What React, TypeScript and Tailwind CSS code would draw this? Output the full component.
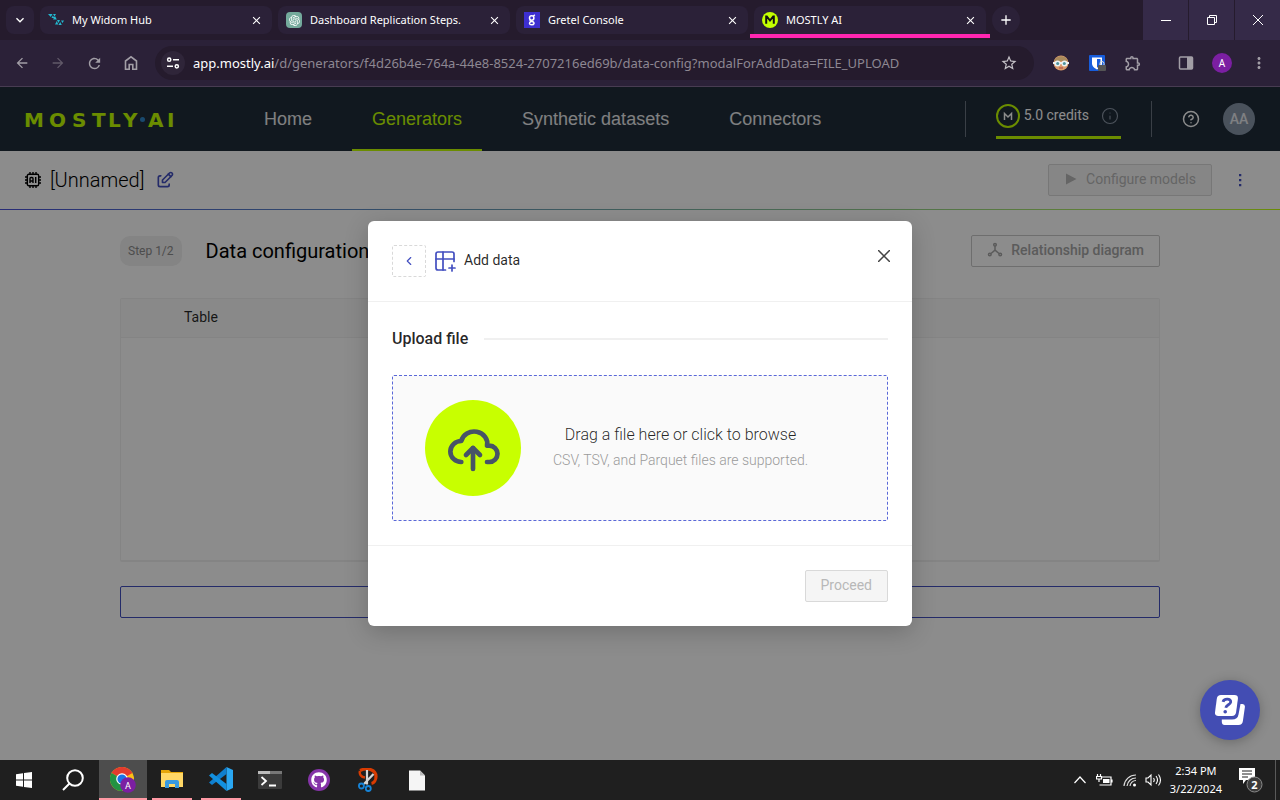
import React from "react";
import { MdArrowBack, MdArrowForward, MdRefresh, MdStarBorder, MdMoreVert, MdAdd, MdClose, MdOutlineExtension, MdKeyboardArrowDown } from "react-icons/md";
import { TbTablePlus, TbCloudUpload, TbEdit } from "react-icons/tb";
import { RiOpenaiFill } from "react-icons/ri";
import { FaGithub } from "react-icons/fa";
import { ChevronLeft, CircleQuestionMark, Info } from "lucide-react";

const chromeFont = "font-['Noto_Sans','Open_Sans',sans-serif]";

function HubIcon() {
  return (
    <svg viewBox="0 0 16 16" className="size-4 shrink-0" fill="#22b8cf">
      <path d="M0 2h4.500L2.800 5zM5 2h3l-1.500 2.500zM3.500 6l1.300-2.500L6.500 6zM7 4l1.800 3.500H5zM9 8h3l-1.500 3zM7 12.500 8.800 9l1.500 3.500zM13 8.500h3L14.500 11zM10.500 13l1.700-3 1.600 3z" />
    </svg>
  );
}
function OpenAiIcon() {
  return (
    <span className="flex size-4 shrink-0 items-center justify-center rounded-sm bg-[#74aa9c] text-white">
      <RiOpenaiFill size={13} />
    </span>
  );
}
function GretelIcon() {
  return (
    <svg viewBox="0 0 16 16" className="size-4 shrink-0">
      <rect width="16" height="16" fill="#3d2fd0" />
      <g fill="none" stroke="#fff" strokeWidth="1.500">
        <circle cx="7.700" cy="6" r="2.200" />
        <path d="M9.300 4.200 10.800 2.800M6.500 8.200c-1 1 .2 1.300 1.500 1.400 1.500.1 2.200.8 2 1.900-.3 1.700-4.300 1.700-4.500 0-.1-.9.700-1.600 1.600-1.800" />
      </g>
    </svg>
  );
}
function MostlyIcon() {
  return (
    <svg viewBox="0 0 16 16" className="size-4 shrink-0">
      <circle cx="8" cy="8" r="8" fill="#c3ff00" />
      <path d="M4.200 11.800V4.500h.6L8 8.500l3.200-4h.6v7.300" fill="none" stroke="#111" strokeWidth="2" />
    </svg>
  );
}

function Tab({ icon, title, active }: { icon: React.ReactNode; title: string; active?: boolean }) {
  return (
    <div className={active ? "relative w-58 min-w-0 shrink rounded-t-lg bg-[#2b2138]" : "relative w-58 min-w-0 shrink rounded-lg bg-[#2b2138]"}>
      <div className="flex h-7 items-center gap-2 pr-2 pl-2">
        {icon}
        <span className="min-w-0 flex-1 truncate text-[11px] leading-4 text-white">{title}</span>
        <button aria-label={"Close " + title} className="flex size-4 items-center justify-center text-white">
          <MdClose size={13} />
        </button>
      </div>
      {active && <div className="absolute top-7 -right-1 -left-1 h-1 bg-[#ff26b0]" />}
    </div>
  );
}

function BrowserChrome() {
  return (
    <div className={chromeFont}>
      <div className="flex h-10 bg-[#251b2d]">
        <div className="flex min-w-0 flex-1 items-start gap-1.5 pt-1.5 pl-1.5">
          <button aria-label="Search tabs" className="flex size-7 shrink-0 items-center justify-center rounded-lg bg-[#2b2138] text-white">
            <MdKeyboardArrowDown size={16} />
          </button>
          <Tab icon={<HubIcon />} title="My Widom Hub" />
          <Tab icon={<OpenAiIcon />} title="Dashboard Replication Steps." />
          <Tab icon={<GretelIcon />} title="Gretel Console" />
          <Tab icon={<MostlyIcon />} title="MOSTLY AI" active />
          <button aria-label="New tab" className="flex size-7 shrink-0 items-center justify-center rounded-full bg-[#2b2138] text-white">
            <MdAdd size={16} />
          </button>
        </div>
        <div className="flex gap-px text-white">
          <button aria-label="Minimize" className="flex w-[45px] items-center justify-center bg-[#352a48]">
            <svg viewBox="0 0 10 10" className="size-2.5" stroke="currentColor"><path d="M0 5.500h10" /></svg>
          </button>
          <button aria-label="Restore" className="flex w-[45px] items-center justify-center bg-[#352a48]">
            <svg viewBox="0 0 10 10" className="size-2.5" fill="none" stroke="currentColor"><path d="M.5 2.500h7v7h-7zM2.500 2.500v-2h7v7h-2" /></svg>
          </button>
          <button aria-label="Close window" className="flex w-[45px] items-center justify-center bg-[#352a48]">
            <svg viewBox="0 0 10 10" className="size-2.5" stroke="currentColor"><path d="M0 0l10 10M10 0L0 10" /></svg>
          </button>
        </div>
      </div>
      <div className="flex h-[47px] items-center border-b border-[#483c52] bg-[#2b2138] pr-3 pl-3.5 text-[#a29ea6]">
        <div className="flex items-center gap-5">
          <button aria-label="Back"><MdArrowBack size={16} /></button>
          <button aria-label="Forward" className="text-[#615968]"><MdArrowForward size={16} /></button>
          <button aria-label="Reload"><MdRefresh size={17} /></button>
          <button aria-label="Home page">
            <svg viewBox="0 0 16 16" className="size-4" fill="none" stroke="currentColor" strokeWidth="1.600"><path d="M2.500 14.200V6L8 1.800 13.500 6v8.200h-3.700V9.500H6.200v4.700z" /></svg>
          </button>
        </div>
        <div className="ml-4 flex h-[34px] min-w-0 flex-1 items-center rounded-full bg-[#251b2d] pr-4 pl-1.5">
          <button aria-label="Site information" className="mr-2 flex size-6 shrink-0 items-center justify-center rounded-full bg-[#2f2539] text-white">
            <svg viewBox="0 0 14 14" className="size-3.5" fill="none" stroke="currentColor" strokeWidth="1.500">
              <circle cx="3.200" cy="3.700" r="1.600" /><path d="M7 3.700h6M1 10.300h6" /><circle cx="10.800" cy="10.300" r="1.600" />
            </svg>
          </button>
          <div className="min-w-0 flex-1 truncate text-[13px] leading-5 text-[#8d8792]">
            <span className="text-white">app.mostly.ai</span>/d/generators/f4d26b4e-764a-44e8-8524-2707216ed69b/data-config?modalForAddData=FILE_UPLOAD
          </div>
          <button aria-label="Bookmark" className="text-[#c4c1c7]"><MdStarBorder size={18} /></button>
        </div>
        <div className="ml-4.5 flex items-center gap-4.5">
          <button aria-label="Goggles extension" className="flex w-4.5 justify-center">
            <svg viewBox="0 0 16 16" className="size-4">
              <circle cx="8" cy="8" r="7.500" fill="#d99a6c" />
              <path d="M1 6a7.500 7.500 0 0 1 14 0z" fill="#a98a5c" />
              <path d="M0 7h16v2H0z" fill="#eee" />
              <circle cx="4.500" cy="8.500" r="3" fill="#e9f2f3" /><circle cx="11.500" cy="8.500" r="3" fill="#e9f2f3" />
              <circle cx="4.700" cy="8.500" r="1.500" fill="#4f929c" /><circle cx="11.300" cy="8.500" r="1.500" fill="#4f929c" />
              <path d="M6 13h4" stroke="#a44" />
            </svg>
          </button>
          <button aria-label="Password manager" className="flex w-4.5 justify-center">
            <svg viewBox="0 0 17 17" className="size-[17px]">
              <rect width="16" height="16" rx="1" fill="#175ddc" />
              <path d="M3 2.500h10v6c0 3-3 5-5 6-2-1-5-3-5-6z" fill="#fff" />
              <path d="M8 4h3.500v4.500C11.500 10.500 9.500 12 8 12.800z" fill="#175ddc" />
              <rect x="9" y="10" width="8" height="6" rx="1" fill="#555" /><path d="M11 10V8.500a2 2 0 0 1 4 0V10" stroke="#ddd" fill="none" />
            </svg>
          </button>
          <button aria-label="Extensions"><MdOutlineExtension size={18} /></button>
          <button aria-label="Side panel" className="ml-4.5">
            <svg viewBox="0 0 16 16" className="size-4"><rect x="1.500" y="2" width="13" height="12" rx="1" fill="none" stroke="currentColor" strokeWidth="1.500" /><path d="M9 2h5v12H9z" fill="currentColor" /></svg>
          </button>
          <button aria-label="Profile" className="flex size-5 items-center justify-center rounded-full bg-[#7b1fa2] text-[10px] leading-4 text-white">A</button>
          <button aria-label="Browser menu"><MdMoreVert size={18} /></button>
        </div>
      </div>
    </div>
  );
}

function MostlyLogo() {
  return (
    <svg viewBox="0 0 152 24" className="h-6 w-[152px] overflow-visible" role="img" aria-label="MOSTLY AI">
      <text x="-1 24 47 67 83 98 123 142" y="20" fill="#c3ff00" fontFamily="DejaVu Sans, sans-serif" fontWeight="700" fontSize="20">MOSTLYAI</text>
      <circle cx="117.500" cy="12.500" r="2.500" fill="#2f86c8" />
    </svg>
  );
}

function AppHeader() {
  const link = "flex items-center border-b-2 border-transparent px-5 pt-0.5";
  return (
    <header className="flex h-16 items-center bg-[#1f2d3a] px-[25px]">
      <MostlyLogo />
      <nav className="ml-[67px] flex gap-5 self-stretch font-['Liberation_Sans',Arial,sans-serif] text-[18px] leading-6 text-white/90">
        <a href="#home" className={link}>Home</a>
        <a href="#generators" className="flex items-center border-b-2 border-[#c3ff00] px-5 pt-0.5 text-[#c3ff00]">Generators</a>
        <a href="#datasets" className={link}>Synthetic datasets</a>
        <a href="#connectors" className={link}>Connectors</a>
      </nav>
      <div className="ml-auto flex items-center">
        <div className="mr-[30px] h-9 w-px bg-[#6b7480]" />
        <div className="mt-1 border-b-3 border-[#c3ff00] pb-2">
          <div className="flex items-center gap-1 pr-0.5">
            <svg viewBox="0 0 24 24" className="size-6" fill="none">
              <circle cx="12" cy="12" r="11" stroke="#c3ff00" strokeWidth="2" />
              <path d="M8.500 16V9.500l3.500 3.500 3.500-3.500V16" stroke="#fff" strokeWidth="1.500" />
            </svg>
            <span className="pb-0.5 text-[14px] leading-5 text-white">5.0 credits</span>
            <Info size={18} strokeWidth={1.5} className="ml-2 text-[#8c97a6]" />
          </div>
        </div>
        <div className="mx-[30px] h-9 w-px bg-[#6b7480]" />
        <button aria-label="Help" className="mr-[23px] text-white"><CircleQuestionMark size={18} strokeWidth={2} /></button>
        <button aria-label="Account" className="flex size-8 items-center justify-center rounded-full bg-[#8795a8] text-[14px] leading-5 font-medium text-white/80">AA</button>
      </div>
    </header>
  );
}

function ChipIcon() {
  return (
    <svg viewBox="0 0 16 16" className="size-4" fill="none" stroke="#000" strokeWidth="1.400">
      <rect x="2.300" y="2.300" width="11.400" height="11.400" rx="1.500" />
      <path d="M5 0v2M8 0v2M11 0v2M5 14v2M8 14v2M11 14v2M0 5h2M0 8h2M0 11h2M14 5h2M14 8h2M14 11h2" />
      <path d="M5 11V6.500q0-1 1-1h1q1 0 1 1V11M5 9h3M10.700 5v6" />
    </svg>
  );
}

function Workspace() {
  return (
    <div className="flex-1 bg-white">
      <div className="flex h-[58px] items-center pr-8 pl-[25px]">
        <ChipIcon />
        <h1 className="mr-[11px] ml-[9px] text-[20px] leading-7 font-light text-black">[Unnamed]</h1>
        <button aria-label="Edit name" className="text-[#434fc0]"><TbEdit size={20} /></button>
        <button disabled className="ml-auto flex h-8 items-center gap-2 rounded-xs border border-[#d9d9d9] bg-[#f5f5f5] px-[15px] pb-0.5 text-[14px] leading-5 text-[#b8b8b8]">
          <svg viewBox="0 0 14 14" className="size-3.5" fill="currentColor"><path d="M2 1.500 12.500 7 2 12.500z" /></svg>
          Configure models
        </button>
        <button aria-label="More actions" className="ml-5 flex size-4 items-center justify-center text-[#434fc0]">
          <svg viewBox="0 0 4 14" className="h-3.5 w-1" fill="currentColor"><path d="M1 1h2.300v2.300H1zM1 6h2.300v2.300H1zM1 11h2.300v2.300H1z" /></svg>
        </button>
      </div>
      <div className="h-px bg-linear-to-r from-[#4a50d8] to-[#c3ff00]" />
      <main className="mx-auto max-w-[1088px] px-6 pt-[25px]">
        <div className="flex items-center">
          <span className="rounded-[10px] bg-[#f0f0f0] px-2 py-1.5 text-[12px] leading-[18px] text-[#8c8c8c]">Step 1/2</span>
          <h2 className="ml-6 text-[20px] leading-7 text-black">Data configuration</h2>
          <button disabled className="ml-auto flex h-8 items-center gap-2 rounded-xs border border-[#c9c9c9] px-[15px] pb-0.5 text-[14px] leading-5 font-medium text-[#a6a6a6]">
            <svg viewBox="0 0 16 16" className="size-4" fill="none" stroke="currentColor" strokeWidth="1.500"><circle cx="8" cy="2.800" r="1.300" /><circle cx="2.800" cy="12.500" r="1.300" /><circle cx="13.200" cy="12.500" r="1.300" /><path d="M8 4v4.500M8 8.200l-4 3.300M8 8.200l4 3.300" /></svg>
            Relationship diagram
          </button>
        </div>
        <div className="mt-[31px] rounded-xs border border-b-2 border-[#f0f0f0]">
          <table className="w-full text-left text-[14px] leading-[22px]">
            <thead>
              <tr className="border-b border-[#f0f0f0] bg-[#fafafa]">
                <th className="pt-[7px] pb-[9px] pl-[63px] font-normal text-black/85">Table</th>
              </tr>
            </thead>
            <tbody><tr><td className="h-[222px]" /></tr></tbody>
          </table>
        </div>
        <button aria-label="Add table" className="mt-6 block h-8 w-full rounded-xs border border-[#434fc0]" />
      </main>
    </div>
  );
}

function AddDataModal() {
  return (
    <div className="absolute inset-0 flex items-start justify-center overflow-hidden bg-black/45 pt-[134px]">
      <div role="dialog" aria-label="Add data" className="w-[544px] max-w-full rounded-md bg-white shadow-[0_6px_24px_rgba(0,0,0,0.2)]">
        <div className="flex items-start border-b border-[#f0f0f0] py-6 pr-5 pl-6">
          <button aria-label="Go back" className="flex h-8 w-[34px] items-center justify-center rounded-xs border border-dashed border-[#d9d9d9] text-[#434fc0]">
            <ChevronLeft size={14} strokeWidth={2} />
          </button>
          <div className="ml-[7px] flex h-8 items-center gap-[7px]">
            <TbTablePlus size={24} strokeWidth={1.7} className="text-[#434fc0]" />
            <span className="pb-0.5 text-[14px] leading-5 text-black/85">Add data</span>
          </div>
          <button aria-label="Close dialog" className="ml-auto flex h-[22px] w-4 items-center justify-center text-[#444]">
            <svg viewBox="0 0 12 12" className="size-3" fill="none" stroke="currentColor" strokeWidth="1.500"><path d="M0 0l12 12M12 0L0 12" /></svg>
          </button>
        </div>
        <div className="p-6">
          <div className="flex items-center gap-4">
            <h3 className="text-[16px] leading-[26px] font-medium text-black/85">Upload file</h3>
            <div className="h-0.5 flex-1 bg-[#f0f0f0]" />
          </div>
          <label className="mt-[23px] flex cursor-pointer items-center rounded-xs border border-dashed border-[#5a68d8] bg-[#fafafa] px-8 py-6">
            <input type="file" className="sr-only" aria-label="Choose a file" />
            <span className="flex size-24 shrink-0 items-center justify-center rounded-full bg-[#c8ff00] text-[#475467]">
              <TbCloudUpload size={56} strokeWidth={2} />
            </span>
            <span className="ml-8 text-center font-light">
              <span className="block text-[16px] leading-[26px] text-black/85">Drag a file here or click to browse</span>
              <span className="block pb-0.5 text-[14px] leading-6 text-[#9a9a9a]">CSV, TSV, and Parquet files are supported.</span>
            </span>
          </label>
        </div>
        <div className="flex justify-end border-t border-[#f0f0f0] p-6">
          <button disabled className="h-8 rounded-xs border border-[#d9d9d9] bg-[#f5f5f5] px-[15px] pb-0.5 text-[14px] leading-5 text-[#b8b8b8]">Proceed</button>
        </div>
      </div>
    </div>
  );
}

function Taskbar() {
  const slot = "flex w-12 items-center justify-center";
  return (
    <footer className={"flex h-10 bg-[#1f1f1f] text-white " + chromeFont}>
      <div className="flex gap-px">
        <button aria-label="Start" className={slot}>
          <svg viewBox="0 0 16 16" className="size-4" fill="#fff"><path d="M0 2.200 7 1.200v6.300H0zM8 1.100 16 0v7.500H8zM0 8.500h7v6.300L0 13.800zM8 8.500h8V16L8 14.900z" /></svg>
        </button>
        <button aria-label="Search" className={slot}>
          <svg viewBox="0 0 22 22" className="size-[22px]" fill="none" stroke="#fff" strokeWidth="2"><circle cx="13" cy="9" r="7.800" /><path d="M7.500 14.500 1 21" /></svg>
        </button>
        <button aria-label="Chrome" className="ml-px flex w-12 items-center justify-center border-b-2 border-[#ff99a4] bg-[#4d4d4d] pt-0.5">
          <svg viewBox="0 0 26 26" className="size-[26px]">
            <circle cx="12" cy="12" r="12" fill="#fbc116" />
            <path d="M12 12 1.600 6A12 12 0 0 1 22.400 6z" fill="#e33b2e" />
            <path d="M12 12 1.600 6A12 12 0 0 0 12 24l5-9z" fill="#229342" />
            <circle cx="12" cy="12" r="5.800" fill="#fff" /><circle cx="12" cy="12" r="4.600" fill="#1a73e8" />
            <circle cx="18" cy="18" r="7.800" fill="#7b1fa2" />
            <text x="18" y="21.500" textAnchor="middle" fontSize="9" fill="#fff" fontFamily="Roboto, sans-serif">A</text>
          </svg>
        </button>
        <button aria-label="File Explorer" className="mx-1 flex w-10 items-center justify-center border-b-2 border-[#ff99a4]">
          <svg viewBox="0 0 22 20" className="h-5 w-[22px]">
            <path d="M0 1h8l2 2h12v5H0z" fill="#e5a50a" /><path d="M0 4h22v14H0z" fill="#ffd766" />
            <path d="M4 19v-6q0-2 2-2h10q2 0 2 2v6h-4v-4H8v4z" fill="#3a9ae0" />
          </svg>
        </button>
        <button aria-label="Visual Studio Code" className="mx-1 flex w-10 items-center justify-center border-b-2 border-[#ff99a4]">
          <svg viewBox="0 0 24 24" className="size-6">
            <path d="M17.500 0 24 3v18l-6.500 3z" fill="#2aa7f2" />
            <path d="M17.500 0v7L3 18l-3-2.500z" fill="#0f7fcf" /><path d="M17.500 24v-7L3 6 0 8.500z" fill="#1390df" />
          </svg>
        </button>
        <button aria-label="Terminal" className={slot}>
          <svg viewBox="0 0 24 18" className="h-[18px] w-6"><rect width="24" height="18" rx="1" fill="#3b3b3b" /><path d="M0 0h24v3H0z" fill="#777" /><path d="M0 0h12v3H0z" fill="#bbb" /><path d="m3.500 6 4.500 4-4.500 4M11 14.500h7" fill="none" stroke="#fff" strokeWidth="1.800" /></svg>
        </button>
        <button aria-label="GitHub Desktop" className={slot}>
          <span className="flex size-[22px] items-center justify-center rounded-full bg-[#8534a8]"><FaGithub size={16} /></span>
        </button>
        <button aria-label="Snipping Tool" className={slot}>
          <svg viewBox="0 0 20 24" className="h-6 w-5" fill="none">
            <path d="M2 2.500C10-1 18 2 18 8.500c0 3.500-2 6.500-4.500 7" stroke="#d83b01" strokeWidth="3.200" />
            <path d="M2 3c-1 3 1 6 5 6.500" stroke="#d83b01" strokeWidth="2.400" />
            <path d="M9 2v14.500M15.500 6 6 16" stroke="#d5d5d5" strokeWidth="2.200" />
            <circle cx="3.400" cy="18" r="2.500" stroke="#1684d8" strokeWidth="1.800" /><circle cx="10.300" cy="20.500" r="2.500" stroke="#1684d8" strokeWidth="1.800" />
          </svg>
        </button>
        <button aria-label="Document" className={slot}>
          <svg viewBox="0 0 16 20" className="h-[21px] w-4"><path d="M0 0h11l5 5v15H0z" fill="#f5f5f5" /><path d="M11 0v5h5z" fill="#bcbcbc" /></svg>
        </button>
      </div>
      <div className="ml-auto flex items-center">
        <button aria-label="Hidden icons"><svg viewBox="0 0 12 8" className="h-2 w-3" fill="none" stroke="#fff" strokeWidth="1.200"><path d="m.5 7 5.500-6 5.500 6" /></svg></button>
        <svg viewBox="0 0 17 14" className="ml-2.5 h-3.5 w-[17px]" fill="none" stroke="#fff" strokeWidth="1.200"><path d="M1.500 1v2M4.500 1v2M.5 3.500h5V6h-5zM3 6v3M6 4h9v8H3.500M16 6.500v3" /><path d="M7 6h6.500v4H7z" fill="#fff" stroke="none" /></svg>
        <svg viewBox="0 0 14 14" className="ml-2.5 size-3.5" fill="none" stroke="#ddd" strokeWidth="1.200"><path d="M1 13A12 12 0 0 1 13 2M4 13a9 9 0 0 1 9-8M7 13a6 6 0 0 1 6-5.500" /><circle cx="11.500" cy="12" r="1.500" fill="#fff" stroke="none" /></svg>
        <svg viewBox="0 0 17 14" className="ml-2 h-3.5 w-[17px]" fill="none" stroke="#fff" strokeWidth="1.100"><path d="M1 5h2l3-3v10L3 9H1zM8.500 5q1.500 2 0 4M11 3q3 4 0 8M13.500 1.500q4 5.500 0 11" /></svg>
        <div className="ml-2 text-center text-[11px] leading-[18px]">
          <div>2:34 PM</div>
          <div>3/22/2024</div>
        </div>
        <button aria-label="Notifications, 2 new" className="mr-3 ml-[17px] flex h-[26px] w-6">
          <svg viewBox="0 0 24 26" className="h-[26px] w-6">
            <path d="M0 1h16v12H7l-3 4v-4H0z" fill="#fff" /><path d="M3 4h10M3 7h10M3 10h6" stroke="#1f1f1f" />
            <circle cx="15.500" cy="17.500" r="7.500" fill="#3b3b3b" stroke="#8a8a8a" />
            <text x="15.500" y="21.500" textAnchor="middle" fontSize="11" fontWeight="700" fill="#fff">2</text>
          </svg>
        </button>
        <div className="mr-1 h-10 w-px bg-[#5a5a5a]" />
      </div>
    </footer>
  );
}

export default function App() {
  return (
    <div className="flex min-h-screen flex-col font-['Roboto',sans-serif]">
      <BrowserChrome />
      <div className="relative flex flex-1 flex-col">
        <AppHeader />
        <Workspace />
        <AddDataModal />
        <button aria-label="Help chat" className="absolute right-5 bottom-5 flex size-15 items-center justify-center rounded-full bg-[#434db3] shadow-[0_2px_12px_rgba(0,0,0,0.25)]">
          <svg viewBox="0 0 30 30" className="size-[30px]">
            <path d="M25.500 9h2q2.700.2 2.400 3l-2 14q-.5 4-4.500 4H9.500q-2.500 0-2.700-3v-2.500H17q5.700 0 6.500-5z" fill="#fff" />
            <path d="M6 0h13.500q3.800 0 3.400 3.700l-1.800 13.600q-.5 3.700-4.200 3.700H3.300Q-.4 21 0 17.300L1.800 3.700Q2.300 0 6 0z" fill="#fff" />
            <path d="M8 6.800c1-3.700 8.200-3.500 7.700.3-.3 2.600-4.500 2.800-4.900 5.700" fill="none" stroke="#434db3" strokeWidth="2.800" /><circle cx="10.200" cy="16.700" r="1.800" fill="#434db3" />
          </svg>
        </button>
      </div>
      <Taskbar />
    </div>
  );
}
